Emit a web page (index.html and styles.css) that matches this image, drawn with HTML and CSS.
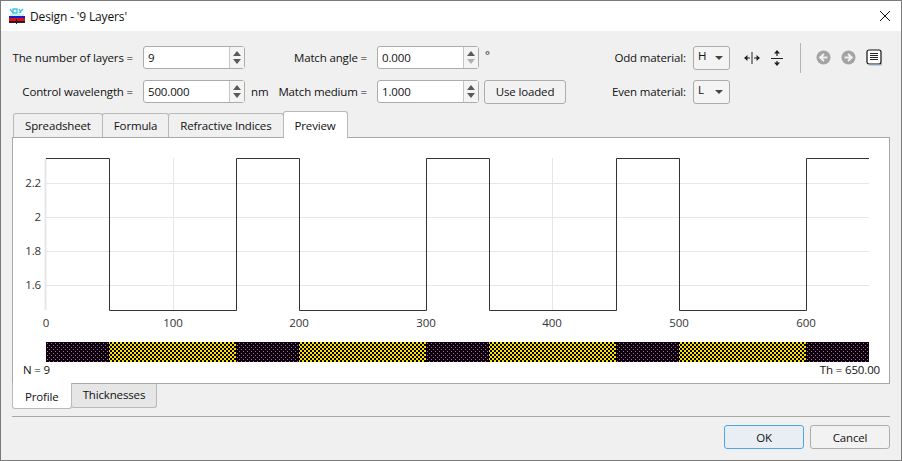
FILE: index.html
```html
<!DOCTYPE html>
<html lang="en">
<head>
  <meta charset="UTF-8">
  <title>Design - '9 Layers'</title>
  <link rel="stylesheet" href="styles.css">
</head>
<body>
  <div class="window">
    <div class="titlebar">
      <svg class="appicon" width="16" height="16" viewBox="0 0 16 16">
        <path d="M1 1l3 4M4 1h4v4H4zM10 5l4-4M10 1l2 4" fill="none" stroke="#35c8e0" stroke-width="1.3"/>
        <path d="M1 7h14" stroke="#9adfe8" stroke-width="1"/>
        <rect x="0" y="8" width="16" height="2" fill="#1a1ad0"/>
        <rect x="0" y="10" width="16" height="3" fill="#e01010"/>
        <rect x="0" y="13" width="16" height="2" fill="#222"/>
        <rect x="7" y="11" width="1" height="5" fill="#222"/>
      </svg>
      <span class="title">Design - '9 Layers'</span>
      <svg class="close" width="10" height="10" viewBox="0 0 10 10"><path d="M0 0l10 10M10 0L0 10" stroke="#111" stroke-width="1"/></svg>
    </div>

    <div class="content">
      <div class="form">
        <label class="lbl">The number of layers =</label>
        <div class="spin"><span class="val">9</span><div class="arrows"><i class="up"></i><i class="down"></i></div></div>
        <span></span>
        <label class="lbl">Match angle =</label>
        <div class="spin"><span class="val">0.000</span><div class="arrows"><i class="up"></i><i class="down off"></i></div></div>
        <span class="deg">°</span>
        <label class="lbl">Odd material:</label>
        <div class="combo">H<i class="caret"></i></div>
        <div class="tools">
          <svg width="16" height="14" viewBox="0 0 16 14"><path d="M8 1v12" stroke="#222"/><path d="M2 7h4M10 7h4" stroke="#222" stroke-width="1.2"/><path d="M0 7l3.500-3v6zM16 7l-3.500-3v6z" fill="#222"/></svg>
          <svg class="vflip" width="12" height="16" viewBox="0 0 12 16"><path d="M0 8.500h12" stroke="#222"/><path d="M6 2v4M6 11v4" stroke="#222" stroke-width="1.2"/><path d="M6 0l3 3.500H3zM6 16l3-3.500H3z" fill="#222"/></svg>
          <div class="toolsep"></div>
          <svg class="nav" width="15" height="15" viewBox="0 0 15 15"><circle cx="7.5" cy="7.5" r="7" fill="#a3a3a3"/><path d="M11.5 7.5H5M8 4L4.2 7.5 8 11" fill="none" stroke="#f0f0f0" stroke-width="2"/></svg>
          <svg class="nav" width="15" height="15" viewBox="0 0 15 15"><circle cx="7.5" cy="7.5" r="7" fill="#a3a3a3"/><path d="M3.5 7.5H10M7 4l3.800 3.500L7 11" fill="none" stroke="#f0f0f0" stroke-width="2"/></svg>
          <svg class="doc" width="17" height="17" viewBox="0 0 17 17"><rect x="1" y="1" width="14" height="14" rx="2" fill="#fff" stroke="#111" stroke-width="1.2"/><path d="M4 4.500h8M4 6.500h8M4 8.500h8M4 10.500h8" stroke="#222"/><path d="M3 16h12.500V14" fill="none" stroke="#8fb4d8"/></svg>
        </div>

        <label class="lbl">Control wavelength =</label>
        <div class="spin"><span class="val">500.000</span><div class="arrows"><i class="up"></i><i class="down"></i></div></div>
        <span class="unit">nm</span>
        <label class="lbl">Match medium =</label>
        <div class="spin"><span class="val">1.000</span><div class="arrows"><i class="up"></i><i class="down"></i></div></div>
        <div class="loaded"><button class="btn">Use loaded</button></div>
        <label class="lbl">Even material:</label>
        <div class="combo">L<i class="caret"></i></div>
        <span></span>
      </div>

      <div class="tabs">
        <div class="tab">Spreadsheet</div>
        <div class="tab">Formula</div>
        <div class="tab">Refractive Indices</div>
        <div class="tab active">Preview</div>
      </div>

      <div class="pane">
        <svg class="plot" width="875" height="196" viewBox="13 138 875 196">
          <g stroke="#e6e6e6" fill="none">
            <path d="M46 183.500H869M46 217.500H869M46 251.500H869M46 285.500H869"/>
            <path d="M173.500 158V310M299.500 158V310M426.500 158V310M552.500 158V310M679.500 158V310M806.500 158V310"/>
            <path d="M45.500 158V310" stroke-width="2"/>
          </g>
          <path d="M46 158.500H109.500V310.500H236.500V158.500H299.500V310.500H426.500V158.500H489.500V310.500H616.500V158.500H679.500V310.500H806.500V158.500H869" fill="none" stroke="#333"/>
          <g class="ticks" text-anchor="end">
            <text x="41" y="187">2.2</text>
            <text x="41" y="221">2</text>
            <text x="41" y="255">1.8</text>
            <text x="41" y="289">1.6</text>
          </g>
          <g class="ticks" text-anchor="middle">
            <text x="46" y="327">0</text>
            <text x="173" y="327">100</text>
            <text x="299" y="327">200</text>
            <text x="426" y="327">300</text>
            <text x="552" y="327">400</text>
            <text x="679" y="327">500</text>
            <text x="806" y="327">600</text>
          </g>
        </svg>
        <svg class="stack" width="823" height="20" viewBox="0 0 823 20" shape-rendering="crispEdges">
          <defs>
            <pattern id="dots" width="4" height="4" patternUnits="userSpaceOnUse">
              <rect width="4" height="4" fill="#000"/>
              <rect x="1" y="1" width="1" height="1" fill="#e040e0"/>
              <rect x="3" y="3" width="1" height="1" fill="#e040e0"/>
            </pattern>
            <pattern id="check" width="4" height="4" patternUnits="userSpaceOnUse">
              <rect width="4" height="4" fill="#000"/>
              <rect x="2" y="0" width="2" height="2" fill="#ffdf00"/>
              <rect x="0" y="2" width="2" height="2" fill="#ffdf00"/>
            </pattern>
          </defs>
          <rect x="0" width="63" height="20" fill="url(#dots)"/>
          <rect x="63" width="127" height="20" fill="url(#check)"/>
          <rect x="190" width="63" height="20" fill="url(#dots)"/>
          <rect x="253" width="127" height="20" fill="url(#check)"/>
          <rect x="380" width="63" height="20" fill="url(#dots)"/>
          <rect x="443" width="127" height="20" fill="url(#check)"/>
          <rect x="570" width="63" height="20" fill="url(#dots)"/>
          <rect x="633" width="127" height="20" fill="url(#check)"/>
          <rect x="760" width="63" height="20" fill="url(#dots)"/>
        </svg>
        <div class="info"><span>N = 9</span><span>Th = 650.00</span></div>
      </div>

      <div class="subtabs">
        <div class="subtab active">Profile</div>
        <div class="subtab">Thicknesses</div>
      </div>

      <div class="footer">
        <button class="btn big default">OK</button>
        <button class="btn big">Cancel</button>
      </div>
    </div>
  </div>
</body>
</html>
```
FILE: styles.css
```css
html, body {
  margin: 0;
  height: 100%;
}

body {
  font-family: "Open Sans", "Noto Sans", sans-serif;
  font-size: 11.5px;
  letter-spacing: -0.15px;
  color: #111;
  overflow: hidden;
}

.window {
  box-sizing: border-box;
  width: 902px;
  height: 461px;
  border: 1px solid #7a7a7a;
  background-color: #f0f0f0;
  display: flex;
  flex-direction: column;
}

.titlebar {
  height: 30px;
  background-color: #fff;
  display: flex;
  align-items: center;
  padding-left: 8px;
  padding-right: 11px;
}

.appicon {
  margin-right: 5px;
}

.title {
  flex: 1;
  font-size: 12px;
}

.content {
  flex: 1;
  padding: 15px 11px 0;
}

/* top form */
.form {
  display: grid;
  grid-template-columns: 121px 112px 30px 92px 112px 87px 120px 44px 1fr;
  grid-template-rows: 23px 23px;
  row-gap: 11px;
  align-items: center;
}

.lbl {
  text-align: right;
  white-space: nowrap;
}

.spin {
  margin-left: 10px;
  width: 102px;
  height: 23px;
  box-sizing: border-box;
  border: 1px solid #acacac;
  border-radius: 3px;
  background-color: #fff;
  display: flex;
  align-items: center;
}

.val {
  flex: 1;
  padding-left: 4px;
}

.arrows {
  width: 14px;
  height: 100%;
  border-left: 1px solid #c4c4c4;
  display: flex;
  flex-direction: column;
  align-items: center;
  justify-content: center;
  gap: 3px;
  background-color: #f4f4f4;
}

.up, .down {
  width: 0;
  height: 0;
  border-left: 4px solid transparent;
  border-right: 4px solid transparent;
}

.up {
  border-bottom: 5px solid #5a5a5a;
}

.down {
  border-top: 5px solid #5a5a5a;
}

.down.off {
  border-top-color: #b0b0b0;
}

.unit {
  padding-left: 6px;
}

.deg {
  padding-left: 6px;
  position: relative;
  top: -3px;
}

.loaded {
  padding-left: 5px;
}

.combo {
  margin-left: 7px;
  width: 37px;
  height: 24px;
  box-sizing: border-box;
  border: 1px solid #acacac;
  border-radius: 3px;
  background-color: #f4f4f4;
  padding-left: 4px;
  line-height: 18px;
  position: relative;
}

.caret {
  position: absolute;
  right: 6px;
  top: 9px;
  border-left: 4px solid transparent;
  border-right: 4px solid transparent;
  border-top: 4px solid #444;
}

.tools {
  display: flex;
  align-items: center;
  padding-left: 14px;
}

.vflip {
  margin-left: 11px;
}

.toolsep {
  width: 1px;
  height: 30px;
  background-color: #b4b4b4;
  margin: 0 15px 0 17px;
}

.nav {
  margin-right: 10px;
}

.btn {
  font: inherit;
  letter-spacing: inherit;
  color: inherit;
  padding: 0;
  width: 82px;
  height: 24px;
  border: 1px solid #adadad;
  border-radius: 3px;
  background-color: #f2f2f2;
}

/* tabs */
.tabs, .subtabs {
  display: flex;
}

.tabs {
  align-items: flex-end;
  height: 26px;
  margin-top: 8px;
  padding-left: 1px;
  position: relative;
  z-index: 1;
}

.tab {
  height: 23px;
  line-height: 24px;
  padding: 0 11px;
  border: 1px solid #b9b9b9;
  border-bottom: none;
  border-radius: 3px 3px 0 0;
  background-color: #f0f0f0;
  margin-right: -1px;
}

.tab.active {
  height: 26px;
  line-height: 27px;
  background-color: #fff;
  margin-right: 0;
  margin-bottom: -1px;
}

.pane {
  box-sizing: border-box;
  height: 247px;
  border: 1px solid #a8a8a8;
  background-color: #fff;
  display: flex;
  flex-direction: column;
}

.plot {
  display: block;
}

.ticks text {
  fill: #333;
}

.stack {
  display: block;
  flex: none;
  margin: 8px 0 0 33px;
}

.info {
  display: flex;
  justify-content: space-between;
  padding: 0 9px 0 10px;
  line-height: 16px;
}

.subtabs {
  height: 25px;
  margin-top: -1px;
}

.subtab {
  height: 23px;
  line-height: 22px;
  padding: 0 11px;
  border: 1px solid #b9b9b9;
  border-top: none;
  border-radius: 0 0 3px 3px;
  background-color: #e6e6e6;
  margin-top: 1px;
  margin-left: -1px;
}

.subtab.active {
  height: 25px;
  line-height: 27px;
  padding: 0 12px;
  background-color: #fff;
  margin-top: 0;
  margin-left: 0;
}

.footer {
  margin-top: 8px;
  border-top: 1px solid #a8a8a8;
  padding-top: 8px;
  display: flex;
  justify-content: flex-end;
  gap: 6px;
}

.btn.big {
  width: 80px;
  height: 24px;
}

.btn.default {
  border-color: #4ea6ea;
  background-color: #e8eef4;
}
```
